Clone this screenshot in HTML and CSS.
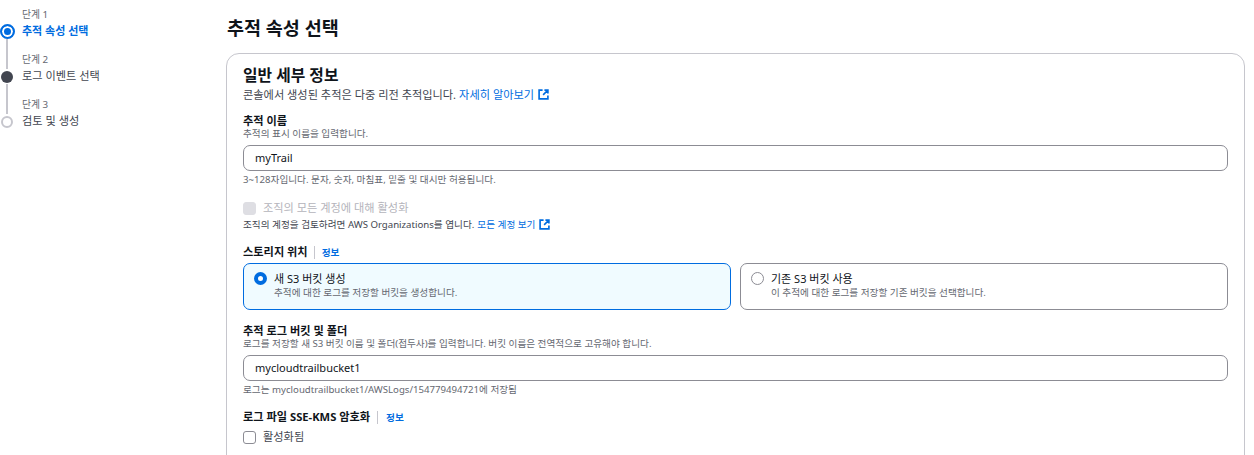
FILE: index.html
```html
<!DOCTYPE html>
<html lang="ko">
<head>
    <meta charset="UTF-8">
    <title>추적 속성 선택</title>
    <link rel="stylesheet" href="styles.css">
</head>
<body>
    <nav class="steps">
        <div class="step step-first">
            <span class="step-label">단계 1</span>
            <span class="step-dot dot-active"></span>
            <span class="step-title title-active">추적 속성 선택</span>
        </div>
        <div class="step">
            <span class="step-line"></span>
            <span class="step-label">단계 2</span>
            <span class="step-dot dot-dark"></span>
            <span class="step-title">로그 이벤트 선택</span>
        </div>
        <div class="step">
            <span class="step-line"></span>
            <span class="step-label">단계 3</span>
            <span class="step-dot dot-empty"></span>
            <span class="step-title">검토 및 생성</span>
        </div>
    </nav>

    <main class="content">
        <h1>추적 속성 선택</h1>
        <section class="card">
            <h2>일반 세부 정보</h2>
            <p class="card-desc">콘솔에서 생성된 추적은 다중 리전 추적입니다. <a href="#">자세히 알아보기</a>
                <svg class="ext-icon" viewBox="0 0 12 12"><path d="M5 1.2H1.2v9.6h9.6V7M7 1.2h3.8V5M10.6 1.4 5.6 6.4"/></svg>
            </p>

            <div class="field field-name">
                <label class="field-label">추적 이름</label>
                <p class="hint hint-above">추적의 표시 이름을 입력합니다.</p>
                <input class="text-input" type="text" value="myTrail">
                <p class="hint hint-below">3~128자입니다. 문자, 숫자, 마침표, 밑줄 및 대시만 허용됩니다.</p>
            </div>

            <div class="field field-org">
                <div class="check-row">
                    <span class="checkbox check-disabled"></span>
                    <span class="check-text text-disabled">조직의 모든 계정에 대해 활성화</span>
                </div>
                <p class="hint hint-dark">조직의 계정을 검토하려면 AWS Organizations를 엽니다. <a href="#">모든 계정 보기</a>
                    <svg class="ext-icon" viewBox="0 0 12 12"><path d="M5 1.2H1.2v9.6h9.6V7M7 1.2h3.8V5M10.6 1.4 5.6 6.4"/></svg>
                </p>
            </div>

            <div class="field field-storage">
                <div class="label-row">
                    <label class="field-label">스토리지 위치</label>
                    <a class="info-link" href="#">정보</a>
                </div>
                <div class="tiles">
                    <div class="tile tile-selected">
                        <span class="radio radio-on"></span>
                        <div>
                            <div class="tile-title">새 S3 버킷 생성</div>
                            <div class="tile-desc">추적에 대한 로그를 저장할 버킷을 생성합니다.</div>
                        </div>
                    </div>
                    <div class="tile">
                        <span class="radio"></span>
                        <div>
                            <div class="tile-title">기존 S3 버킷 사용</div>
                            <div class="tile-desc">이 추적에 대한 로그를 저장할 기존 버킷을 선택합니다.</div>
                        </div>
                    </div>
                </div>
            </div>

            <div class="field field-bucket">
                <label class="field-label">추적 로그 버킷 및 폴더</label>
                <p class="hint hint-above">로그를 저장할 새 S3 버킷 이름 및 폴더(접두사)를 입력합니다. 버킷 이름은 전역적으로 고유해야 합니다.</p>
                <input class="text-input" type="text" value="mycloudtrailbucket1">
                <p class="hint hint-below">로그는 mycloudtrailbucket1/AWSLogs/154779494721에 저장됨</p>
            </div>

            <div class="field field-kms">
                <div class="label-row">
                    <label class="field-label">로그 파일 SSE-KMS 암호화</label>
                    <a class="info-link info-link-wide" href="#">정보</a>
                </div>
                <div class="check-row check-row-kms">
                    <span class="checkbox"></span>
                    <span class="check-text">활성화됨</span>
                </div>
            </div>
        </section>
    </main>
</body>
</html>
```

FILE: styles.css
```css
html, body {
    height: 100%;
    overflow: hidden;
}
body {
    margin: 0;
    display: flex;
    background-color: #fff;
    color: #0f141a;
    font-family: "Noto Sans", "Noto Sans CJK KR", sans-serif;
    font-size: 11px;
    line-height: 14px;
}
a {
    color: #006ce0;
    text-decoration: none;
}
p {
    margin: 0;
}

/* left stepper */
.steps {
    width: 226px;
    flex-shrink: 0;
    padding-top: 7px;
    box-sizing: border-box;
}
.step {
    display: grid;
    grid-template-columns: 15px 1fr;
    grid-template-rows: 30px 15px;
    column-gap: 7px;
}
.step-first {
    grid-template-rows: 17px 15px;
}
.step-line {
    grid-column: 1;
    grid-row: 1;
    justify-self: start;
    width: 2px;
    margin-left: 6px;
    background-color: #c6c6cd;
}
.step-label {
    grid-column: 2;
    grid-row: 1;
    align-self: end;
    color: #656871;
    font-size: 9.8px;
    line-height: 14px;
    margin-bottom: 2px;
}
.step-dot {
    grid-column: 1;
    grid-row: 2;
    width: 15px;
    height: 15px;
    border-radius: 50%;
    box-sizing: border-box;
}
.dot-active {
    border: 2px solid #006ce0;
    background-color: #006ce0;
    box-shadow: inset 0 0 0 2px #fff;
}
.dot-dark {
    width: 12px;
    height: 12px;
    margin: 2px 1px 1px;
    background-color: #424650;
}
.dot-empty {
    width: 12px;
    height: 12px;
    margin: 2px 1px 1px;
    border: 2px solid #c6c6cd;
}
.step-title {
    grid-column: 2;
    grid-row: 2;
    font-size: 11.2px;
    color: #424650;
}
.title-active {
    color: #006ce0;
    font-weight: 700;
    font-size: 11px;
}

/* main column */
.content {
    flex: 1;
    min-width: 0;
    padding-right: 9px;
}
h1 {
    margin: 15px 0 13px 1px;
    font-size: 18.5px;
    line-height: 25px;
    font-weight: 700;
}
.card {
    border: 1px solid #c6c6cd;
    border-radius: 13px;
    padding: 11px 16px 40px;
}
h2 {
    margin: 0 0 2px;
    font-size: 15.8px;
    line-height: 20px;
    font-weight: 700;
}
.card-desc {
    font-size: 11.2px;
    color: #424650;
    line-height: 15px;
    display: flex;
    align-items: center;
    gap: 3px;
}
.ext-icon {
    width: 11px;
    height: 11px;
    margin-left: 1px;
    fill: none;
    stroke: #006ce0;
    stroke-width: 1.8;
}

/* form fields */
.field-name { margin-top: 12px; }
.field-org { margin-top: 15px; }
.field-storage { margin-top: 14px; }
.field-bucket { margin-top: 14px; }
.field-kms { margin-top: 14px; }
.field-label {
    display: block;
    font-size: 11.2px;
    font-weight: 700;
    line-height: 14px;
}
.hint {
    font-size: 9.65px;
    line-height: 13px;
    color: #656871;
}
.hint-above {
    margin-top: -1px;
}
.hint-below {
    margin-top: 2px;
}
.hint-dark {
    color: #424650;
    margin-top: 3px;
    display: flex;
    align-items: center;
    gap: 3px;
}
.text-input {
    display: block;
    width: 100%;
    height: 26px;
    margin-top: 5px;
    padding: 0 11px 2px;
    box-sizing: border-box;
    border: 1px solid #8c8c94;
    border-radius: 7px;
    font-family: inherit;
    font-size: 11px;
    color: #0f141a;
    background-color: #fff;
    outline: none;
}
.check-row {
    display: flex;
    align-items: center;
    gap: 7px;
}
.check-row-kms {
    margin-top: 6px;
}
.checkbox {
    width: 13px;
    height: 13px;
    box-sizing: border-box;
    border: 1.5px solid #8c8c94;
    border-radius: 3px;
}
.check-disabled {
    background-color: #dedee3;
    border-color: #dedee3;
}
.check-text {
    font-size: 11.2px;
    color: #424650;
}
.text-disabled {
    color: #b4b4bb;
}
.label-row {
    display: flex;
    align-items: center;
}
.info-link {
    font-size: 9.65px;
    font-weight: 700;
    margin-left: 6px;
    padding-left: 7px;
    border-left: 1px solid #c6c6cd;
    line-height: 13px;
}
.info-link-wide {
    margin-left: 7px;
    padding-left: 8px;
}
.tiles {
    display: grid;
    grid-template-columns: 1fr 1fr;
    gap: 9px;
    margin-top: 4px;
}
.tile {
    display: flex;
    gap: 7px;
    height: 47px;
    padding: 8px 10px;
    box-sizing: border-box;
    border: 1px solid #8c8c94;
    border-radius: 7px;
}
.tile-selected {
    border-color: #006ce0;
    background-color: #f0fbff;
}
.radio {
    width: 13px;
    height: 13px;
    flex-shrink: 0;
    box-sizing: border-box;
    border: 1.5px solid #8c8c94;
    border-radius: 50%;
}
.radio-on {
    border: 4px solid #006ce0;
    background-color: #fff;
}
.tile-title {
    font-size: 11px;
    line-height: 14px;
}
.tile-desc {
    font-size: 9.65px;
    line-height: 13px;
    color: #656871;
}
```
